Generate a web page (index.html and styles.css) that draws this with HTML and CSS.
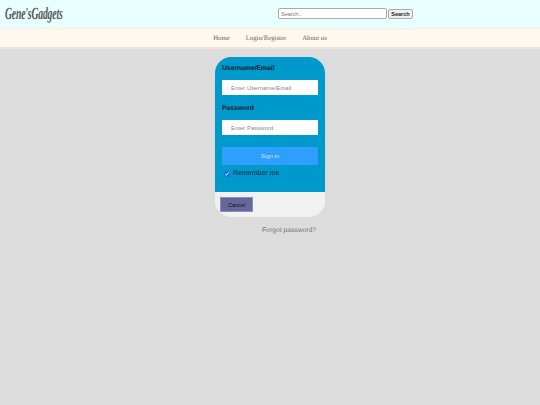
FILE: index.html
```html
<!DOCTYPE html>
<html lang="en">
  <head>
    <meta charset="UTF-8">
    <meta name="viewport" content="width=device-width, initial-scale=1.0">
    <title>Gene'sGadgets</title>
    <link rel="stylesheet" href="styles.css">
  </head>
  <body>
    <header class="top-bar">
      <div class="logo-box"><span class="logo">Gene'sGadgets</span></div>
      <form class="search-form">
        <input type="text" class="search-input" placeholder="Search..">
        <button type="button" class="search-btn">Search</button>
      </form>
    </header>
    <nav class="nav-bar">
      <a href="#">Home</a>
      <a href="#">Login/Register</a>
      <a href="#">About us</a>
    </nav>
    <main class="page">
      <form class="login-card">
        <div class="login-body">
          <label class="field-label">Username/Email</label>
          <input type="text" class="field-input" placeholder="Enter Username/Email">
          <label class="field-label">Password</label>
          <input type="password" class="field-input" placeholder="Enter Password">
          <button type="button" class="signin-btn">Sign in</button>
          <label class="remember">
            <input type="checkbox" checked>
            Remember me
          </label>
        </div>
        <div class="login-footer">
          <button type="button" class="cancel-btn">Cancel</button>
        </div>
      </form>
      <a href="#" class="forgot">Forgot password?</a>
    </main>
  </body>
</html>
```

FILE: styles.css
```css
html, body {
  margin: 0;
  padding: 0;
  height: 100%;
}

body {
  background: #dcdcdc;
  font-family: "Liberation Sans", Arial, sans-serif;
  text-rendering: geometricPrecision;
  display: flex;
  flex-direction: column;
}

.top-bar {
  height: 28px;
  background: #e8ffff;
  display: flex;
  align-items: center;
}

.logo-box {
  margin-left: 5px;
  width: 273px;
}

.logo {
  display: inline-block;
  font-family: "Liberation Serif", serif;
  font-style: italic;
  font-weight: bold;
  font-size: 17px;
  letter-spacing: -0.3px;
  color: #555;
  transform: scaleX(0.57);
  transform-origin: left center;
}

.search-form {
  display: flex;
  align-items: center;
  gap: 1px;
  margin-top: -1px;
}

.search-input {
  width: 103px;
  height: 9px;
  box-sizing: content-box;
  padding: 0 2px;
  border: 1px solid #aaa;
  border-radius: 2px;
  background: #fff;
  font-size: 5.5px;
  font-family: "Liberation Sans", Arial, sans-serif;
}

.search-input::placeholder {
  color: #777;
}

.search-btn {
  height: 8px;
  box-sizing: content-box;
  width: 23px;
  padding: 0;
  border: 1px solid #aaa;
  border-radius: 2px;
  background: #efefef;
  color: #222;
  font-size: 5.5px;
  font-weight: bold;
  font-family: "Liberation Sans", Arial, sans-serif;
}

.nav-bar {
  height: 18px;
  background: #fff8ee;
  border-top: 1px solid #fbeedd;
  border-bottom: 2px solid #f0e4d4;
  display: flex;
  justify-content: center;
  align-items: center;
  gap: 16px;
}

.nav-bar a {
  font-family: "Liberation Serif", serif;
  font-size: 6.75px;
  color: #666;
  text-decoration: none;
}

.page {
  flex: 1;
  display: flex;
  flex-direction: column;
  align-items: center;
  padding-top: 8px;
}

.login-card {
  width: 110px;
  height: 160px;
  border-radius: 16px;
  overflow: hidden;
  background: #f1f1f1;
  display: flex;
  flex-direction: column;
}

.login-body {
  height: 135px;
  box-sizing: border-box;
  background: #0099cc;
  padding: 7px 7px 0;
  display: flex;
  flex-direction: column;
}

.field-label {
  font-size: 6.75px;
  font-weight: bold;
  color: #0a1a24;
  line-height: 9px;
}

.field-input {
  height: 15px;
  box-sizing: border-box;
  margin: 7px 0 9px;
  padding: 0 9px;
  border: 0;
  background: #fff;
  font-size: 6px;
  font-family: "Liberation Sans", Arial, sans-serif;
}

.field-input::placeholder {
  color: #888;
}

.signin-btn {
  height: 18px;
  margin-top: 3px;
  padding: 0;
  border: 0;
  background: #2e9fff;
  color: #cfe8ff;
  font-size: 6px;
  font-family: "Liberation Sans", Arial, sans-serif;
}

.remember {
  margin-top: 5px;
  padding-left: 2px;
  display: flex;
  align-items: center;
  gap: 3px;
  font-size: 7px;
  color: #0a2a3a;
}

.remember input {
  width: 6px;
  height: 6px;
  margin: 0;
  accent-color: #0a6cf0;
}

.login-footer {
  flex: 1;
  padding: 5px;
}

.cancel-btn {
  display: block;
  width: 33px;
  height: 15px;
  padding: 0;
  border: 1px solid #8d8cc0;
  background: #666699;
  color: #111;
  font-size: 5.5px;
  font-family: "Liberation Sans", Arial, sans-serif;
}

.forgot {
  align-self: flex-start;
  margin-left: 262px;
  margin-top: 10px;
  font-size: 6.75px;
  color: #777;
  text-decoration: none;
}
```
